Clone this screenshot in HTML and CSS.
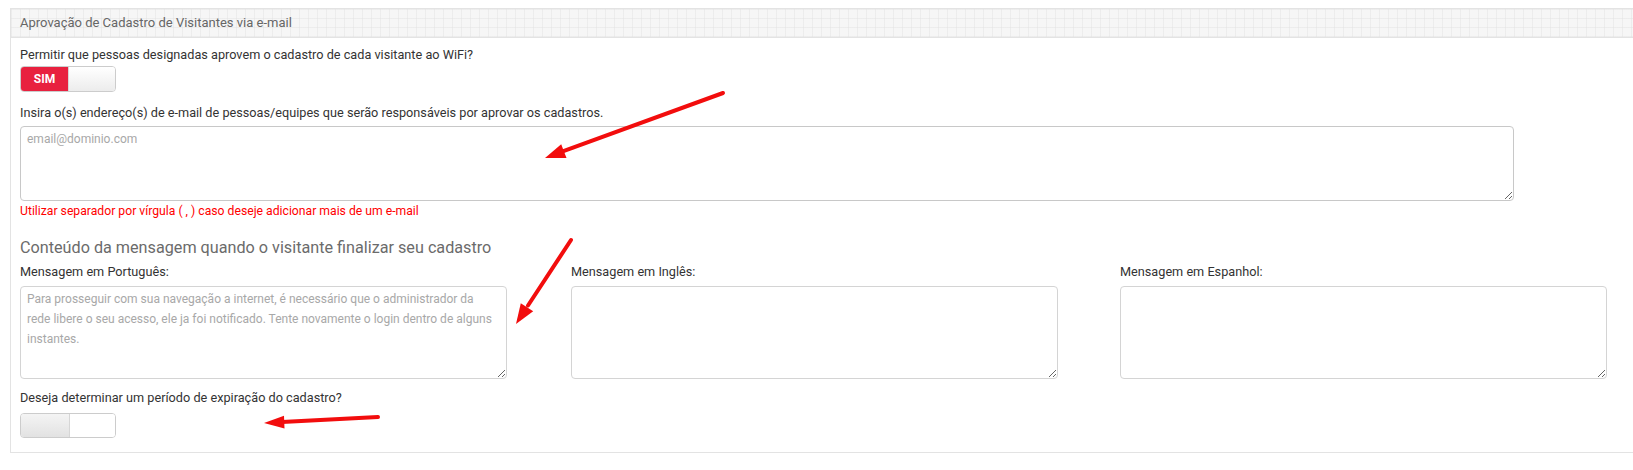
FILE: index.html
```html
<!DOCTYPE html>
<html lang="pt-BR">
<head>
<meta charset="utf-8">
<title>Aprovação de Cadastro</title>
<link rel="stylesheet" href="styles.css">
</head>
<body>
<div class="panel">
  <div class="panel-heading">Aprovação de Cadastro de Visitantes via e-mail</div>
  <div class="panel-body">
    <label class="lbl lbl-first">Permitir que pessoas designadas aprovem o cadastro de cada visitante ao WiFi?</label>
    <div class="switch switch-on">
      <span class="sw-label">SIM</span>
      <span class="sw-handle"></span>
    </div>
    <label class="lbl lbl-emails">Insira o(s) endereço(s) de e-mail de pessoas/equipes que serão responsáveis por aprovar os cadastros.</label>
    <textarea class="ta ta-email" placeholder="email@dominio.com"></textarea>
    <p class="hint">Utilizar separador por vírgula ( , ) caso deseje adicionar mais de um e-mail</p>
    <h4 class="section-title">Conteúdo da mensagem quando o visitante finalizar seu cadastro</h4>
    <div class="msg-grid">
      <div class="msg-col">
        <label class="lbl">Mensagem em Português:</label>
        <textarea class="ta ta-msg" placeholder="Para prosseguir com sua navegação a internet, é necessário que o administrador da rede libere o seu acesso, ele ja foi notificado. Tente novamente o login dentro de alguns instantes."></textarea>
      </div>
      <div class="msg-col">
        <label class="lbl">Mensagem em Inglês:</label>
        <textarea class="ta ta-msg"></textarea>
      </div>
      <div class="msg-col">
        <label class="lbl">Mensagem em Espanhol:</label>
        <textarea class="ta ta-msg"></textarea>
      </div>
    </div>
    <label class="lbl lbl-expire">Deseja determinar um período de expiração do cadastro?</label>
    <div class="switch switch-off">
      <span class="sw-handle"></span>
      <span class="sw-blank"></span>
    </div>
  </div>
</div>

<svg class="annot" width="1633" height="470" viewBox="0 0 1633 470" xmlns="http://www.w3.org/2000/svg">
  <g stroke="#f20d0d" stroke-width="4" stroke-linecap="round" fill="none">
    <line x1="723" y1="93" x2="562" y2="151.6"/>
    <line x1="571" y1="240" x2="528" y2="305.5"/>
    <line x1="378" y1="417" x2="282" y2="422"/>
  </g>
  <g fill="#f20d0d">
    <polygon points="545,158 561.2,144.3 566.5,158"/>
    <polygon points="516,324 520.8,303.3 533.2,311.3"/>
    <polygon points="264,423 284,415.8 284.5,428.5"/>
  </g>
</svg>
</body>
</html>
```

FILE: styles.css
```css
html, body {
  margin: 0;
  padding: 0;
  background: #fff;
  overflow: hidden;
}

body {
  width: 1633px;
  height: 470px;
  position: relative;
  font-family: Roboto, "Liberation Sans", Arial, sans-serif;
  font-size: 12px;
  color: #333;
}

.panel {
  margin: 8px 0 0 10px;
  width: 1640px;
  border: 1px solid #e3e3e3;
  border-right: none;
  box-sizing: border-box;
}

.panel-heading {
  height: 28px;
  line-height: 28px;
  padding-left: 9px;
  font-size: 13px;
  color: #666;
  border-bottom: 1px solid #e3e3e3;
  background-color: #f6f6f6;
  background-image:
    linear-gradient(to right, rgba(225,225,225,0.45) 1px, transparent 1px),
    linear-gradient(to bottom, rgba(225,225,225,0.45) 1px, transparent 1px);
  background-size: 9px 9px;
}

.panel-body {
  padding: 8px 0 14px 9px;
  display: flex;
  flex-direction: column;
  align-items: flex-start;
}

.lbl {
  display: block;
  font-size: 12.7px;
  line-height: 17px;
  color: #333;
}

.switch {
  display: flex;
  width: 96px;
  height: 26px;
  box-sizing: border-box;
  border: 1px solid #ccc;
  border-radius: 4px;
  overflow: hidden;
  margin-top: 3px;
}

.switch-on .sw-label {
  width: 47px;
  background: #e8213f;
  color: #fff;
  font-weight: bold;
  font-size: 12px;
  line-height: 24px;
  text-align: center;
}

.switch-on .sw-handle {
  flex: 1;
  background: linear-gradient(to bottom, #ffffff, #ececec);
  border-left: 1px solid #d6d6d6;
}

.switch-off {
  height: 25px;
  margin-top: 7px;
}

.switch-off .sw-handle {
  width: 48px;
  background: linear-gradient(to bottom, #f4f4f4, #e2e2e2);
  border-right: 1px solid #d6d6d6;
}

.switch-off .sw-blank {
  flex: 1;
  background: #fff;
}

.lbl-emails {
  margin-top: 12px;
}

.ta {
  display: block;
  box-sizing: border-box;
  border: 1px solid #c8c8c8;
  border-radius: 4px;
  padding: 5px 6px;
  font-family: Roboto, "Liberation Sans", Arial, sans-serif;
  font-size: 12px;
  line-height: 19.5px;
  color: #555;
  margin: 0;
  background: #fff;
}

.ta::placeholder {
  color: #a8a8a8;
}

.ta-email {
  width: 1494px;
  height: 75px;
  margin-top: 5px;
  padding-top: 3px;
}

.hint {
  margin: 2px 0 0;
  font-size: 12.2px;
  line-height: 17px;
  color: #f00;
}

.section-title {
  margin: 19px 0 0;
  font-size: 16.2px;
  line-height: 18px;
  font-weight: 400;
  color: #6b6b6b;
}

.msg-grid {
  display: grid;
  grid-template-columns: 551px 549px 487px;
  margin-top: 6px;
}

.ta-msg {
  width: 487px;
  height: 93px;
  margin-top: 6px;
  border-color: #d4d4d4;
  padding-top: 3px;
  line-height: 19.8px;
}

.lbl-expire {
  margin-top: 10px;
}

.annot {
  position: absolute;
  top: 0;
  left: 0;
  pointer-events: none;
}
```
